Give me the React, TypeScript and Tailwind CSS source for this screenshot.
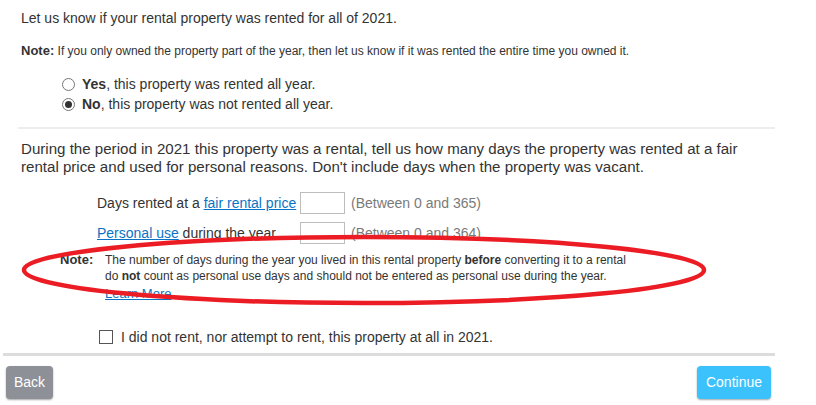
import React from "react";

function Radio({ checked }: { checked?: boolean }) {
  return (
    <span className="w-[13px] h-[13px] rounded-full border border-[#767676] bg-white flex items-center justify-center shrink-0">
      {checked && <span className="w-[7px] h-[7px] rounded-full bg-[#333]" />}
    </span>
  );
}

export default function App() {
  return (
    <div className="relative w-[816px] h-[405px] bg-white font-['Liberation_Sans',Arial,sans-serif] text-[#333] overflow-hidden">
      <div className="ml-[18px] w-[757px] pt-[8px]">
        <div className="pl-[3px]">
          <p className="text-[14px] leading-[20px]">Let us know if your rental property was rented for all of 2021.</p>
          <p className="mt-[15px] text-[12px] leading-[16px]">
            <span className="font-bold text-[13px]">Note:</span> If you only owned the property part of the year, then let us know if it was rented the entire time you owned it.
          </p>
          <div className="mt-[15px] ml-[41px] flex flex-col text-[14px] leading-[20px]">
            <label className="flex items-center gap-[7px]">
              <Radio />
              <span>
                <b>Yes</b>, this property was rented all year.
              </span>
            </label>
            <label className="flex items-center gap-[7px]">
              <Radio checked />
              <span>
                <b>No</b>, this property was not rented all year.
              </span>
            </label>
          </div>
        </div>
        <div className="mt-[13px] h-[2px] bg-[#ededed]" />
        <div className="pl-[3px]">
          <p className="mt-[11px] w-[728px] text-[15.1px] leading-[18px]">
            During the period in 2021 this property was a rental, tell us how many days the property was rented at a fair rental price and used for personal reasons. Don't include days when the property was vacant.
          </p>
          <div className="ml-[76px] mt-[16px] text-[14px]">
            <div className="flex items-center h-[22px]">
              <span className="w-[203px]">
                Days rented at a <a className="text-[#0b73c4] underline">fair rental price</a>
              </span>
              <span className="w-[45px] h-[22px] border border-[#bdbdbd] bg-white" />
              <span className="ml-[6px] text-[#7a7a7a]">(Between 0 and 365)</span>
            </div>
            <div className="flex items-center h-[22px] mt-[8px]">
              <span className="w-[203px]">
                <a className="text-[#0b73c4] underline">Personal use</a> during the year
              </span>
              <span className="w-[45px] h-[22px] border border-[#bdbdbd] bg-white" />
              <span className="ml-[6px] text-[#7a7a7a]">(Between 0 and 364)</span>
            </div>
          </div>
          <div className="ml-[39px] mt-[8px] flex text-[12px] leading-[16px]">
            <span className="w-[45px] font-bold text-[13px] leading-[16px]">Note:</span>
            <div>
              <p className="leading-[16px]">
                The number of days during the year you lived in this rental property <b>before</b> converting it to a rental
                <br />
                do <b>not</b> count as personal use days and should not be entered as personal use during the year.
              </p>
              <a className="block mt-[2px] text-[13px] leading-[16px] text-[#0b73c4] underline">Learn More</a>
            </div>
          </div>
          <label className="ml-[78px] mt-[25px] flex items-center gap-[8px] text-[14px] leading-[20px]">
            <span className="w-[14px] h-[14px] border border-[#555] bg-white shrink-0" />
            <span>I did not rent, nor attempt to rent, this property at all in 2021.</span>
          </label>
        </div>
      </div>
      <div className="ml-[3px] w-[772px] mt-[6px] h-[3px] bg-[#dcdcdc]" />
      <div className="ml-[6px] w-[765px] mt-[10px] flex justify-between">
        <button className="h-[33px] w-[47px] rounded-[4px] bg-[#8d9096] text-white text-[14px] shadow-[0_1px_2px_rgba(0,0,0,0.35)]">
          Back
        </button>
        <button className="h-[33px] w-[74px] rounded-[4px] bg-[#3bc1fb] text-white text-[14px] shadow-[0_1px_2px_rgba(0,0,0,0.35)]">
          Continue
        </button>
      </div>
      {/* hand-drawn red highlight around the note */}
      <svg className="absolute left-0 top-0 pointer-events-none" width="816" height="405">
        <ellipse cx="364" cy="270" rx="340" ry="33" fill="none" stroke="#ec1c24" strokeWidth="4.5" />
      </svg>
    </div>
  );
}
